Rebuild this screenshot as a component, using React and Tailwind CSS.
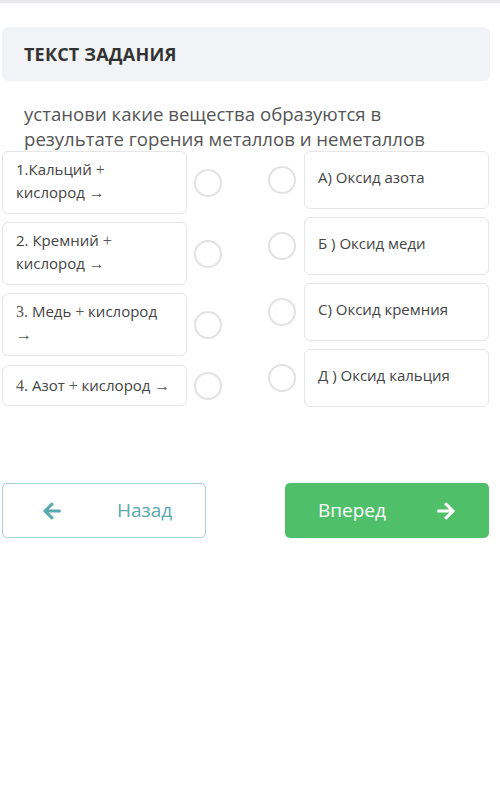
import React from "react";
import { FaArrowLeft, FaArrowRight } from "react-icons/fa";

const M = ({ children }) => (
  <span className="text-[16px] text-[#555]" style={{ fontFamily: '"Liberation Serif", serif' }}>
    {children}
  </span>
);

const left = [
  [<>1.Кальций <M>+</M></>, <>кислород <M>→</M></>],
  [<>2. Кремний <M>+</M></>, <>кислород <M>→</M></>],
  [<><M>3.</M> Медь <M>+</M> кислород</>, <M>→</M>],
  [<><M>4.</M> Азот <M>+</M> кислород <M>→</M></>],
];

const right = ["А) Оксид азота", "Б ) Оксид меди", "С) Оксид кремния", "Д ) Оксид кальция"];

const Circle = () => (
  <div className="w-[28px] h-[28px] rounded-full border-[2.5px] border-[#e2e2e2] bg-white shrink-0" />
);

export default function App() {
  return (
    <div
      className="w-[500px] h-[803px] bg-white text-[#444]"
      style={{ fontFamily: '"Open Sans", "Noto Sans", sans-serif' }}
    >
      <div className="h-[3px] bg-[#e9e9eb]" />

      <div className="mt-[24px] ml-[2px] w-[488px] h-[54px] rounded-md bg-[#f2f3f7] flex items-center px-[22px]">
        <h1 className="text-[18px] font-bold text-[#333] tracking-[0.2px]">ТЕКСТ ЗАДАНИЯ</h1>
      </div>

      <p className="mt-[20px] px-[24px] text-[18.6px] leading-[25px] text-[#555]">
        установи какие вещества образуются в результате горения металлов и неметаллов
      </p>

      <div className="flex">
        <div className="ml-[2px] flex flex-col">
          {left.map((lines, i) => (
            <div key={i} className={"flex items-center " + (i === 0 ? "" : i === 3 ? "mt-[9px]" : "mt-[8px]")}>
              <div
                className={
                  "w-[185px] rounded-md border border-[#e6e6e6] px-[13px] text-[15px] leading-[22px] " +
                  (i === 3 ? "h-[41px] pt-[8px]" : "h-[63px] pt-[6px]")
                }
              >
                {lines.map((l, j) => (
                  <div key={j} className="whitespace-nowrap">{l}</div>
                ))}
              </div>
              <div className="ml-[7px]">
                <Circle />
              </div>
            </div>
          ))}
        </div>

        <div className="ml-[46px] flex flex-col gap-[8px]">
          {right.map((t, i) => (
            <div key={i} className="flex items-center">
              <Circle />
              <div className="ml-[8px] w-[185px] h-[58px] rounded-md border border-[#e6e6e6] px-[13px] pt-[14px] text-[15px] leading-[22px]">
                {t}
              </div>
            </div>
          ))}
        </div>
      </div>

      <div className="mt-[76px] flex justify-between pl-[2px] pr-[11px]">
        <button className="w-[204px] h-[55px] rounded-[5px] border-[1.5px] border-[#a6d4d4] flex items-center text-[#5aa9ad]">
          <FaArrowLeft className="ml-[39px] text-[20px]" />
          <span className="ml-[55px] text-[19px]">Назад</span>
        </button>
        <button className="w-[204px] h-[55px] rounded-[5px] bg-[#4fbf69] flex items-center text-white">
          <span className="ml-[33px] text-[19px]">Вперед</span>
          <FaArrowRight className="ml-[50px] text-[20px]" />
        </button>
      </div>
    </div>
  );
}
